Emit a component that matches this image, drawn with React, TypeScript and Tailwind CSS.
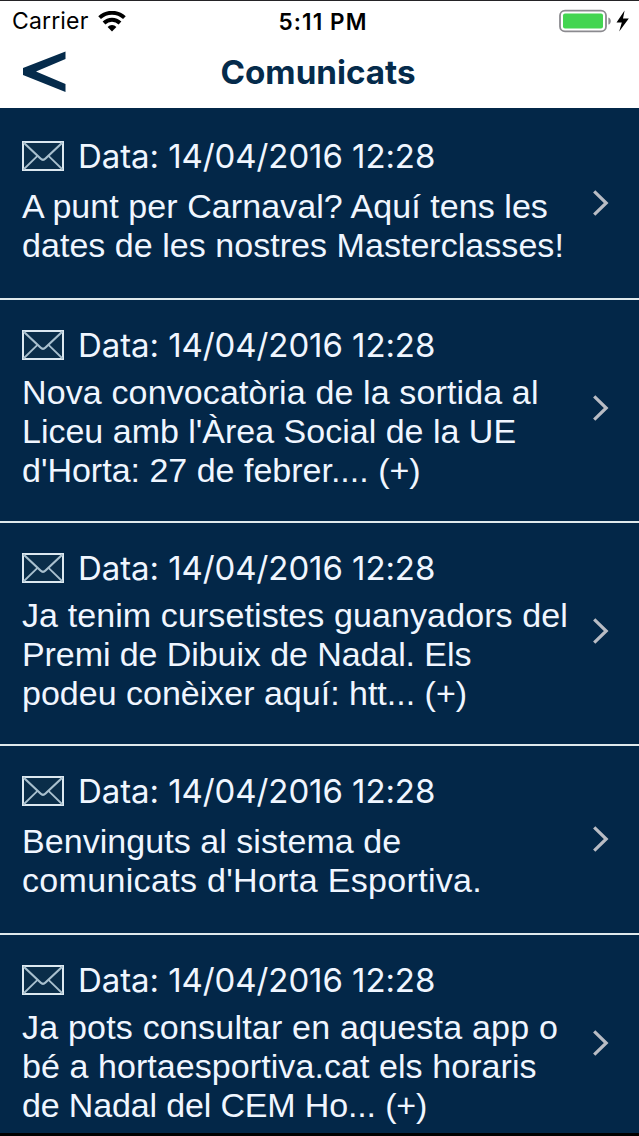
import React from "react";

type Notice = {
  id: number;
  date: string;
  height: string;
  top: string;
  gap: string;
  arrow: string;
  lines: { text: string; tracking: string }[];
};

const notices: Notice[] = [
  {
    id: 1,
    date: "14/04/2016 12:28",
    height: "h-[192px]",
    top: "pt-[28px]",
    gap: "mt-[10.5px]",
    arrow: "pb-0",
    lines: [
      { text: "A punt per Carnaval? Aquí tens les", tracking: "tracking-[0.07px]" },
      { text: "dates de les nostres Masterclasses!", tracking: "tracking-[0.04px]" },
    ],
  },
  {
    id: 2,
    date: "14/04/2016 12:28",
    height: "h-[223px]",
    top: "pt-[25px]",
    gap: "mt-[7.7px]",
    arrow: "pb-[6px]",
    lines: [
      { text: "Nova convocatòria de la sortida al", tracking: "tracking-[0.13px]" },
      { text: "Liceu amb l'Àrea Social de la UE", tracking: "tracking-[0px]" },
      { text: "d'Horta: 27 de febrer.... (+)", tracking: "tracking-[0px]" },
    ],
  },
  {
    id: 3,
    date: "14/04/2016 12:28",
    height: "h-[223px]",
    top: "pt-[25px]",
    gap: "mt-[7.7px]",
    arrow: "pb-[6px]",
    lines: [
      { text: "Ja tenim cursetistes guanyadors del", tracking: "tracking-[0.1px]" },
      { text: "Premi de Dibuix de Nadal. Els", tracking: "tracking-[-0.08px]" },
      { text: "podeu conèixer aquí: htt... (+)", tracking: "tracking-[0px]" },
    ],
  },
  {
    id: 4,
    date: "14/04/2016 12:28",
    height: "h-[189px]",
    top: "pt-[25px]",
    gap: "mt-[10.7px]",
    arrow: "pb-[2px]",
    lines: [
      { text: "Benvinguts al sistema de", tracking: "tracking-[0.05px]" },
      { text: "comunicats d'Horta Esportiva.", tracking: "tracking-[0.33px]" },
    ],
  },
  {
    id: 5,
    date: "14/04/2016 12:28",
    height: "h-[223px]",
    top: "pt-[25px]",
    gap: "mt-[7.7px]",
    arrow: "pb-[6px]",
    lines: [
      { text: "Ja pots consultar en aquesta app o", tracking: "tracking-[0.2px]" },
      { text: "bé a hortaesportiva.cat els horaris", tracking: "tracking-[0.07px]" },
      { text: "de Nadal del CEM Ho... (+)", tracking: "tracking-[-0.15px]" },
    ],
  },
];

function WifiIcon() {
  return (
    <svg width="28" height="21" viewBox="0 0 28 21" fill="none" stroke="#000" strokeWidth="3.9">
      <path d="M1.6 6.7A18 18 0 0 1 26.4 6.7" />
      <path d="M6 12A11.4 11.4 0 0 1 22 12" />
      <path d="M14 20.4L9.6 15.9A6.3 6.3 0 0 1 18.4 15.9Z" fill="#000" stroke="none" />
    </svg>
  );
}

function BatteryIcon() {
  return (
    <svg width="72" height="24" viewBox="0 0 72 24">
      <rect x="1" y="1.6" width="46" height="20.8" rx="5" fill="#fff" stroke="#8b8a8f" strokeWidth="1.8" />
      <rect x="4" y="4.6" width="40" height="14.8" rx="2" fill="#43d551" />
      <path d="M49.4 8.4C52.6 9.4 52.6 14.6 49.4 15.6Z" fill="#8b8a8f" />
      <path d="M65.6 1.4L57.5 13.6H62.8L60.2 22.4L69.8 9.4H64Z" fill="#000" />
    </svg>
  );
}

function MailIcon() {
  return (
    <svg width="42" height="30" viewBox="0 0 42 30" fill="none" stroke="#a9c0ce" strokeWidth="1.8">
      <rect x="1" y="1" width="40" height="28" fill="#0a2d49" stroke="#dce8f0" strokeWidth="2" />
      <path d="M1.5 1.5L18.5 17.5Q21 20 23.5 17.5L40.5 1.5" strokeWidth="2.2" />
      <path d="M1.5 28.5L15.5 14.8M40.5 28.5L26.5 14.8" />
    </svg>
  );
}

function ChevronIcon() {
  return (
    <svg width="18" height="28" viewBox="0 0 18 28" fill="none" stroke="#b9bcc4" strokeWidth="3.2">
      <path d="M2.2 2.4L14.2 14L2.2 25.6" />
    </svg>
  );
}

function NoticeRow({ notice }: { notice: Notice }) {
  return (
    <li className={`flex shrink-0 border-b-2 border-[#dfe9ec] pl-[22px] ${notice.height}`}>
      <div className={`flex-1 ${notice.top}`}>
        <div className="flex h-[40px] items-center gap-[14px]">
          <MailIcon />
          <span className="font-[Inter] text-[33px] leading-[40px] tracking-[-0.08px] whitespace-nowrap">
            Data: {notice.date}
          </span>
        </div>
        <p className={`font-['Liberation_Sans'] text-[34px] leading-[39.3px] ${notice.gap}`}>
          {notice.lines.map((line) => (
            <span key={line.text} className={`block whitespace-nowrap ${line.tracking}`}>
              {line.text}
            </span>
          ))}
        </p>
      </div>
      <div className={`flex w-[47px] items-center ${notice.arrow}`}>
        <ChevronIcon />
      </div>
    </li>
  );
}

export default function App() {
  return (
    <div className="flex h-[1136px] w-[639px] flex-col overflow-hidden border-t border-b-[3px] border-t-[#242326] border-b-black bg-[#032748] font-[Inter,sans-serif] text-[#f0f6ff]">
      <header className="h-[107px] shrink-0 bg-white">
        <div className="grid h-[40px] grid-cols-3 items-center text-black">
          <div className="flex items-center gap-[10px] pt-px pl-[12px]">
            <span className="text-[23px] tracking-[0.15px]">Carrier</span>
            <WifiIcon />
          </div>
          <span className="pt-px pl-[7px] text-center text-[22.5px] font-semibold tracking-[1.1px]">
            5:11 PM
          </span>
          <div className="flex justify-end pr-[8px]">
            <BatteryIcon />
          </div>
        </div>
        <div className="grid h-[61px] grid-cols-[90px_1fr_90px] items-center">
          <button className="pl-[22px]" aria-label="Enrere">
            <svg width="46" height="42" viewBox="0 0 46 42" fill="#052b4b">
              <path d="M43.5 0.5V8L14 20.5L43.5 33V41L1 24V17Z" />
            </svg>
          </button>
          <h1 className="pt-[2px] pr-[3px] text-center text-[33.2px] font-bold text-[#052b4b]">Comunicats</h1>
        </div>
      </header>
      <ul className="flex flex-col">
        {notices.map((notice) => (
          <NoticeRow key={notice.id} notice={notice} />
        ))}
      </ul>
    </div>
  );
}
